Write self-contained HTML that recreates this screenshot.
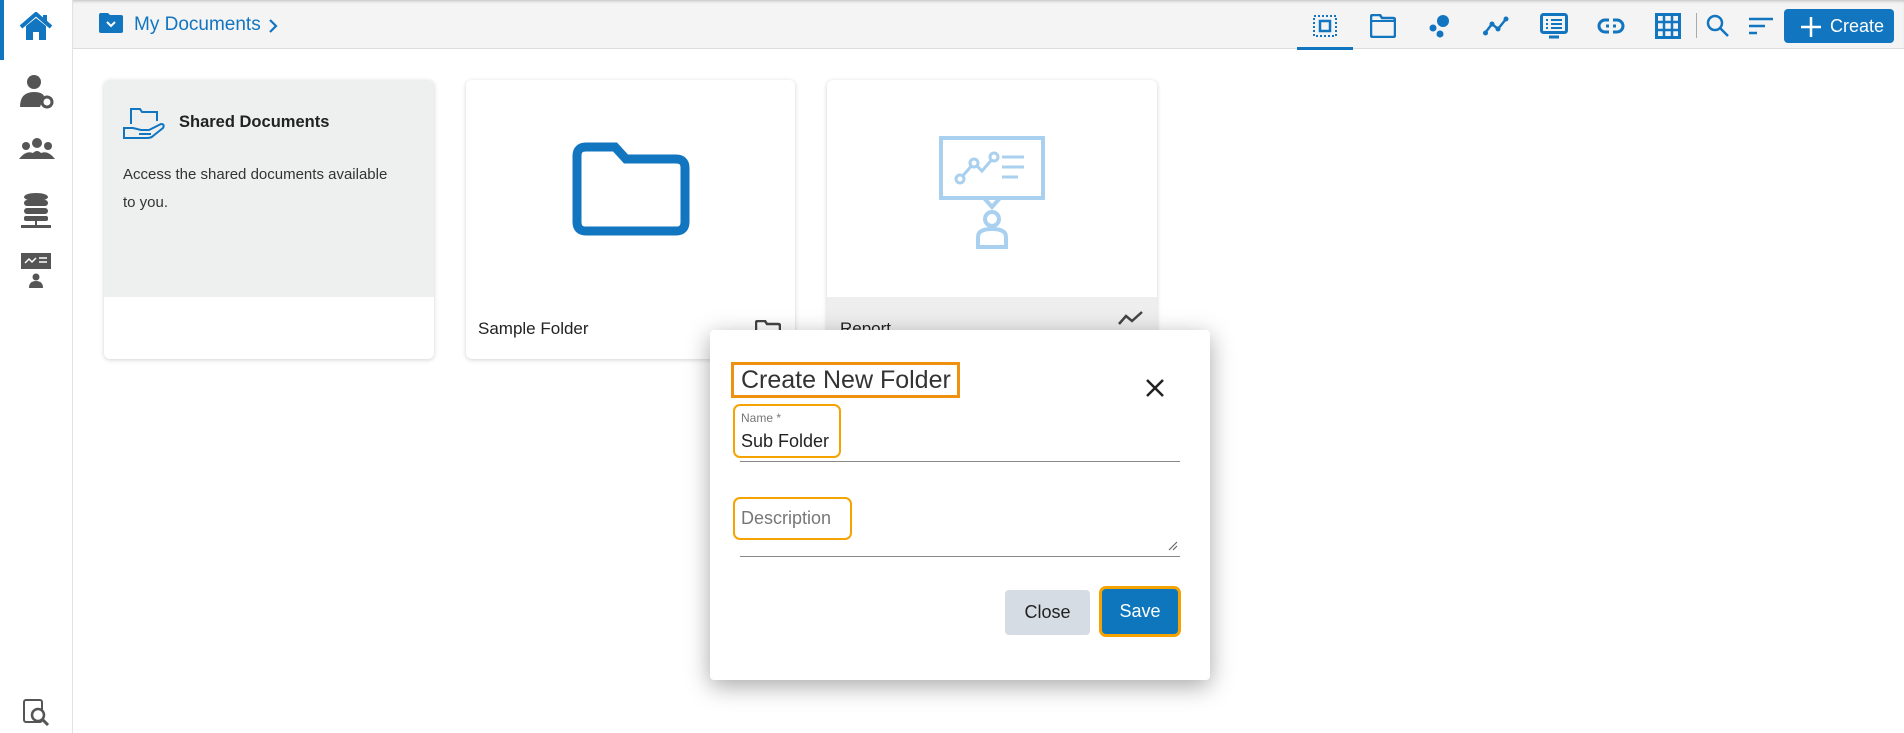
<!DOCTYPE html>
<html><head><meta charset="utf-8"><style>
*{margin:0;padding:0;box-sizing:border-box}
body{width:1904px;height:733px;overflow:hidden;background:#fff;font-family:"Liberation Sans",sans-serif;position:relative}
.abs{position:absolute}
.side{left:0;top:0;width:73px;height:733px;background:#fff;border-right:1px solid #e2e2e2}
.hdr{left:73px;top:0;width:1831px;height:49px;background:#f4f4f4;border-bottom:1px solid #ddd;box-shadow:inset 0 3px 3px -2px #bbb}
.card{border-radius:6px;box-shadow:0 1px 5px rgba(0,0,0,.18);overflow:hidden;background:#fff}
.blue{color:#1175c0}
</style></head><body>
<div class="abs side"></div>
<div class="abs" style="left:0;top:0;width:4px;height:60px;background:#1175c0"></div>
<svg class="abs" style="left:19px;top:12px" width="34" height="30" viewBox="0 0 34 30"><path d="M2 15 L17 2 L32 15" stroke="#1175c0" stroke-width="4" fill="none"/><path d="M7 14 L17 6 L27 14 V28 H20 V20 H14 V28 H7Z" fill="#1175c0"/><rect x="24" y="3" width="4" height="8" fill="#1175c0"/></svg>
<svg class="abs" style="left:20px;top:73px" width="34" height="36" viewBox="0 0 34 36"><circle cx="14" cy="9" r="7" fill="#555"/><path d="M0 34 Q0 19 14 19 Q22 19 24 23 L20 34Z" fill="#555"/><circle cx="27" cy="29" r="5" fill="none" stroke="#555" stroke-width="3"/></svg>
<svg class="abs" style="left:19px;top:137px" width="36" height="24" viewBox="0 0 36 24"><circle cx="18" cy="6" r="5" fill="#555"/><circle cx="7" cy="9" r="4" fill="#555"/><circle cx="29" cy="9" r="4" fill="#555"/><path d="M0 22 Q7 13 14 16 Q18 12 22 16 Q29 13 36 22Z" fill="#555"/></svg>
<svg class="abs" style="left:21px;top:192px" width="30" height="38" viewBox="0 0 30 38"><ellipse cx="15" cy="5" rx="12" ry="4" fill="#555"/><rect x="3" y="8" width="24" height="6" rx="3" fill="#555"/><rect x="3" y="16" width="24" height="6" rx="3" fill="#555"/><rect x="3" y="24" width="24" height="5" rx="2" fill="#555"/><rect x="14" y="29" width="2" height="5" fill="#555"/><rect x="0" y="33" width="30" height="3" fill="#555"/></svg>
<svg class="abs" style="left:21px;top:253px" width="30" height="36" viewBox="0 0 30 36"><rect x="0" y="0" width="30" height="16" fill="#555"/><path d="M4 10 L8 6 L11 9 L15 5" stroke="#fff" stroke-width="1.5" fill="none"/><path d="M18 5H26M18 9H26" stroke="#fff" stroke-width="1.5"/><circle cx="15" cy="24" r="3.5" fill="#555"/><path d="M8 35 Q8 28 15 28 Q22 28 22 35Z" fill="#555"/></svg>
<svg class="abs" style="left:22px;top:698px" width="28" height="28" viewBox="0 0 28 28"><rect x="2" y="2" width="18" height="22" rx="2" fill="none" stroke="#555" stroke-width="2"/><circle cx="16" cy="17" r="6" fill="#fff" stroke="#555" stroke-width="2.5"/><path d="M20 21 L26 27" stroke="#555" stroke-width="3"/></svg>

<div class="abs hdr"></div>
<svg class="abs" style="left:99px;top:13px" width="24" height="20" viewBox="0 0 24 20"><path d="M0 2 Q0 0 2 0 H9 L11 2 H22 Q24 2 24 4 V18 Q24 20 22 20 H2 Q0 20 0 18Z" fill="#1175c0"/><path d="M8 9 L12 13 L16 9" stroke="#fff" stroke-width="2" fill="none"/></svg>
<div class="abs blue" style="left:134px;top:14px;font-size:19px">My Documents</div>
<svg class="abs" style="left:268px;top:19px" width="10" height="14"><path d="M2 1 L8 7 L2 13" stroke="#1175c0" stroke-width="2.2" fill="none"/></svg>

<svg class="abs" style="left:1312px;top:14px" width="26" height="24"><rect x="2" y="2" width="22" height="20" fill="none" stroke="#1175c0" stroke-width="2" stroke-dasharray="2 2"/><rect x="8" y="7" width="10" height="10" fill="none" stroke="#1175c0" stroke-width="2.5"/></svg>
<div class="abs" style="left:1297px;top:47px;width:56px;height:3px;background:#1175c0"></div>
<svg class="abs" style="left:1370px;top:14px" width="26" height="24"><path d="M1 3 Q1 1 3 1 H10 L12 4 H23 Q25 4 25 6 V21 Q25 23 23 23 H3 Q1 23 1 21Z" fill="none" stroke="#1175c0" stroke-width="2.5"/><path d="M1 7 H25" stroke="#1175c0" stroke-width="2"/></svg>
<svg class="abs" style="left:1428px;top:14px" width="24" height="24"><circle cx="15" cy="7" r="6" fill="#1175c0"/><circle cx="5" cy="14" r="3.5" fill="#1175c0"/><circle cx="12" cy="20" r="3.5" fill="#1175c0"/></svg>
<svg class="abs" style="left:1483px;top:16px" width="26" height="20"><path d="M2 17 L9 8 L15 13 L23 3" stroke="#1175c0" stroke-width="2.5" fill="none"/><circle cx="2.5" cy="17" r="2.5" fill="#1175c0"/><circle cx="9" cy="8" r="2.5" fill="#1175c0"/><circle cx="15" cy="13" r="2.5" fill="#1175c0"/><circle cx="23" cy="3" r="2.5" fill="#1175c0"/></svg>
<svg class="abs" style="left:1540px;top:13px" width="28" height="26"><rect x="1.5" y="1.5" width="25" height="18" rx="2" fill="none" stroke="#1175c0" stroke-width="3"/><path d="M6 7H8M11 7H22M6 11H8M11 11H22M6 15H8M11 15H22" stroke="#1175c0" stroke-width="2"/><path d="M9 24H19" stroke="#1175c0" stroke-width="3"/></svg>
<svg class="abs" style="left:1597px;top:17px" width="28" height="18"><rect x="2" y="3" width="24" height="12" rx="6" fill="none" stroke="#1175c0" stroke-width="3"/><path d="M9 9H19" stroke="#1175c0" stroke-width="3"/><rect x="12" y="0" width="4" height="18" fill="#f4f4f4"/></svg>
<svg class="abs" style="left:1655px;top:13px" width="26" height="26"><rect x="1.5" y="1.5" width="23" height="23" fill="none" stroke="#1175c0" stroke-width="3"/><path d="M9 1V25M17 1V25M1 9H25M1 17H25" stroke="#1175c0" stroke-width="2.5"/></svg>
<div class="abs" style="left:1696px;top:13px;width:1px;height:25px;background:#aaa"></div>
<svg class="abs" style="left:1706px;top:14px" width="24" height="24"><circle cx="9" cy="9" r="7" fill="none" stroke="#1175c0" stroke-width="2.5"/><path d="M14 14 L22 22" stroke="#1175c0" stroke-width="2.5"/></svg>
<svg class="abs" style="left:1749px;top:17px" width="24" height="18"><path d="M0 2H24M0 9H16M0 16H8" stroke="#1175c0" stroke-width="2.5"/></svg>
<div class="abs" style="left:1784px;top:9px;width:110px;height:34px;background:#1175c0;border-radius:4px;color:#fff;font-size:18px;line-height:34px;padding-left:46px">Create</div>
<svg class="abs" style="left:1800px;top:16px" width="22" height="22"><path d="M11 1V21M1 11H21" stroke="#fff" stroke-width="2.5"/></svg>

<div class="abs card" style="left:104px;top:80px;width:330px;height:279px">
<div style="height:217px;background:#eef0f0"></div></div>
<svg class="abs" style="left:123px;top:106px" width="44" height="34" viewBox="0 0 44 34"><path d="M8 18 V3 H17 L19 6 H34 V15" fill="none" stroke="#1175c0" stroke-width="2"/><path d="M1 32 V22 H10 L18 24 H26 L38 18 Q42 18 40 22 L30 30 Q28 32 24 32Z M16 28 H28" fill="none" stroke="#1175c0" stroke-width="2"/></svg>
<div class="abs" style="left:179px;top:113px;font-size:16.5px;font-weight:bold;color:#222">Shared Documents</div>
<div class="abs" style="left:123px;top:161px;font-size:15px;line-height:28px;color:#333;width:270px">Access the shared documents available to you.</div>

<div class="abs card" style="left:466px;top:80px;width:329px;height:279px"></div>
<svg class="abs" style="left:572px;top:142px" width="118" height="94" viewBox="0 0 118 94"><path d="M5 14 Q5 5 14 5 H43 L54 17 H104 Q113 17 113 26 V80 Q113 89 104 89 H14 Q5 89 5 80Z" fill="none" stroke="#1175c0" stroke-width="9"/></svg>
<div class="abs" style="left:478px;top:319px;font-size:17px;color:#222">Sample Folder</div>
<svg class="abs" style="left:755px;top:320px" width="26" height="22"><path d="M1 3 Q1 1 3 1 H10 L12 4 H23 Q25 4 25 6 V21 H1Z" fill="none" stroke="#444" stroke-width="2.5"/></svg>

<div class="abs card" style="left:827px;top:80px;width:330px;height:279px"><div style="height:217px"></div><div style="height:62px;background:#eee"></div></div>
<svg class="abs" style="left:938px;top:135px" width="108" height="116" viewBox="0 0 108 116"><rect x="3" y="3" width="102" height="60" fill="none" stroke="#a9d0ee" stroke-width="4"/><path d="M22 44 L36 28 L44 36 L56 22" stroke="#a9d0ee" stroke-width="3" fill="none"/><circle cx="22" cy="44" r="4" fill="#fff" stroke="#a9d0ee" stroke-width="3"/><circle cx="36" cy="28" r="4" fill="#fff" stroke="#a9d0ee" stroke-width="3"/><circle cx="56" cy="22" r="4" fill="#fff" stroke="#a9d0ee" stroke-width="3"/><path d="M64 22H86M64 32H86M64 42H80" stroke="#a9d0ee" stroke-width="3"/><path d="M46 63 L54 72 L62 63" fill="none" stroke="#a9d0ee" stroke-width="4"/><circle cx="54" cy="84" r="7" fill="none" stroke="#a9d0ee" stroke-width="4"/><path d="M40 112 V102 Q40 94 54 94 Q68 94 68 102 V112Z" fill="none" stroke="#a9d0ee" stroke-width="4"/></svg>
<div class="abs" style="left:840px;top:319px;font-size:17px;color:#222">Report</div>
<svg class="abs" style="left:1117px;top:309px" width="28" height="18"><path d="M2 15 L9 7 L15 12 L25 3" stroke="#444" stroke-width="2.5" fill="none"/></svg>

<div class="abs" style="left:710px;top:330px;width:500px;height:350px;background:#fff;border-radius:4px;box-shadow:0 6px 24px rgba(0,0,0,.35)"></div>
<div class="abs" style="left:731px;top:362px;width:229px;height:36px;border:3px solid #f0900f"></div>
<div class="abs" style="left:741px;top:366px;font-size:25px;color:#333">Create New Folder</div>
<svg class="abs" style="left:1145px;top:378px" width="20" height="20"><path d="M2 2L18 18M18 2L2 18" stroke="#222" stroke-width="2.5"/></svg>
<div class="abs" style="left:733px;top:404px;width:108px;height:54px;border:2px solid #f5a300;border-radius:7px"></div>
<div class="abs" style="left:741px;top:411px;font-size:12px;color:#777">Name *</div>
<div class="abs" style="left:741px;top:431px;font-size:18px;color:#222">Sub Folder</div>
<div class="abs" style="left:740px;top:461px;width:440px;height:1px;background:#888"></div>
<div class="abs" style="left:733px;top:497px;width:119px;height:43px;border:2px solid #f5a300;border-radius:7px"></div>
<div class="abs" style="left:741px;top:508px;font-size:18px;color:#777">Description</div>
<svg class="abs" style="left:1167px;top:540px" width="12" height="12"><path d="M2 10L10 2M6 10L10 6" stroke="#666" stroke-width="1.2"/></svg>
<div class="abs" style="left:740px;top:556px;width:440px;height:1px;background:#888"></div>
<div class="abs" style="left:1005px;top:590px;width:85px;height:45px;background:#d5dce4;border-radius:4px;font-size:18px;line-height:45px;text-align:center;color:#222">Close</div>
<div class="abs" style="left:1099px;top:586px;width:82px;height:51px;border:3px solid #f5a300;border-radius:7px;background:#0e76bd;font-size:18px;line-height:45px;text-align:center;color:#fff">Save</div>
</body></html>
